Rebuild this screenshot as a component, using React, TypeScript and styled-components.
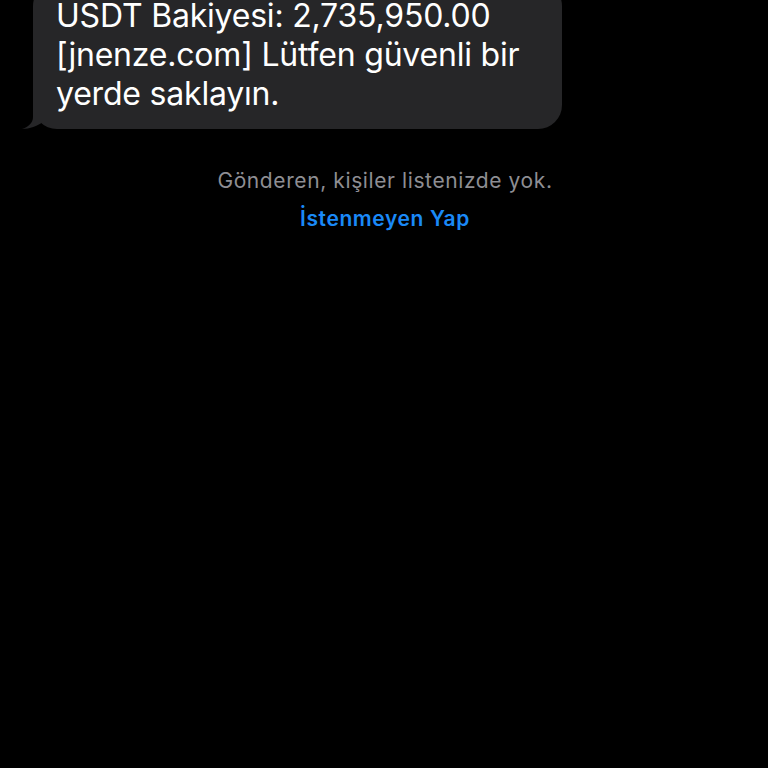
import React from 'react'
import styled, { createGlobalStyle } from 'styled-components'

const GlobalStyle = createGlobalStyle`
  html, body {
    margin: 0;
    padding: 0;
    background: #000;
  }
  body {
    font-family: Inter, "Liberation Sans", sans-serif;
    -webkit-font-smoothing: antialiased;
  }
`

const Screen = styled.div`
  width: 768px;
  height: 768px;
  background: #000;
  overflow: hidden;
  display: flex;
  flex-direction: column;
`

const Thread = styled.div`
  display: flex;
  padding-left: 33px;
`

const Bubble = styled.div`
  position: relative;
  width: 529px;
  box-sizing: border-box;
  margin-top: -18px;
  padding: 14px 12px 16px 23px;
  background: #262628;
  border-radius: 24px;
  color: #fff;
  font-size: 32px;
  line-height: 39px;
  letter-spacing: -0.2px;
`

const Tail = styled.svg`
  position: absolute;
  left: -11px;
  bottom: 0;
  width: 32px;
  height: 24px;
`

const Notice = styled.div`
  display: flex;
  flex-direction: column;
  align-items: center;
  margin-top: 40px;
  padding-left: 2px;
  font-size: 21px;
  line-height: 24px;
  letter-spacing: 0.6px;
`

const NoticeText = styled.span`
  color: #8e8e93;
`

const JunkLink = styled.a`
  margin-top: 14px;
  color: #1a89f7;
  font-weight: 600;
  text-decoration: none;
  cursor: pointer;
`

export default function App() {
  return (
    <>
      <GlobalStyle />
      <Screen>
        <Thread>
          <Bubble>
            USDT Bakiyesi: 2,735,950.00
            <br />
            [jnenze.com] Lütfen güvenli bir
            <br />
            yerde saklayın.
            <Tail viewBox="0 0 32 24">
              <path
                d="M11 0 L11 12 C11 18 6 22 0 24 C8 24 15 21 21 17 L30 17 L30 0 Z"
                fill="#262628"
              />
            </Tail>
          </Bubble>
        </Thread>
        <Notice>
          <NoticeText>Gönderen, kişiler listenizde yok.</NoticeText>
          <JunkLink>İstenmeyen Yap</JunkLink>
        </Notice>
      </Screen>
    </>
  )
}
